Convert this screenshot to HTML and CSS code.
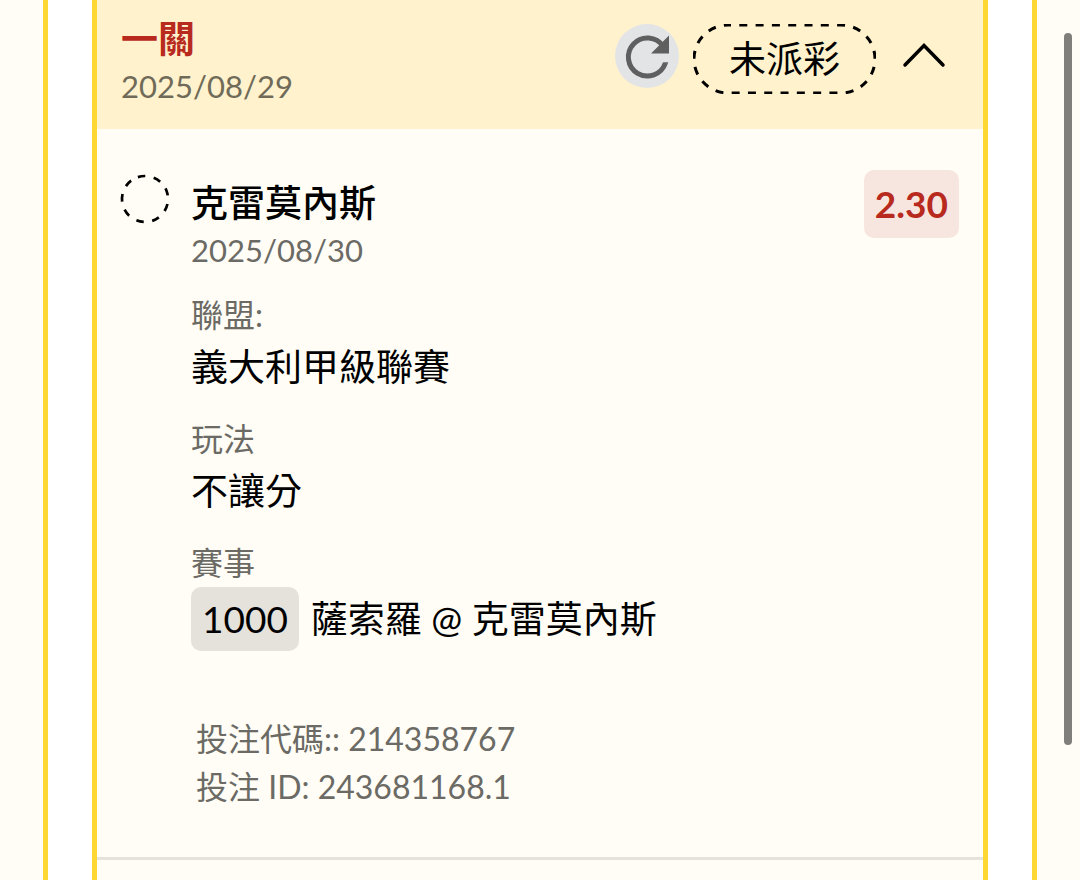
FILE: index.html
```html
<!DOCTYPE html>
<html lang="zh-Hant">
<head>
<meta charset="utf-8">
<meta name="viewport" content="width=device-width, initial-scale=1">
<title>投注</title>
<link rel="stylesheet" href="styles.css">
</head>
<body>
<main class="panel">
  <article class="slip">
    <header class="slip-header">
      <div class="slip-heading">
        <h1 class="slip-title">一關</h1>
        <time class="date" datetime="2025-08-29">2025/08/29</time>
      </div>
      <div class="slip-actions">
        <button class="refresh" type="button" aria-label="重新整理">
          <svg class="refresh-icon" viewBox="0 0 64 64" aria-hidden="true">
            <path d="M48.1 22.300A19 19 0 1 0 50.4 39" fill="none" stroke="#5f5f5f" stroke-width="5"/>
            <path d="M48 38.200H53.200L52.700 40Z" fill="#5f5f5f"/>
            <path d="M54 11.500V29.500H36Z" fill="#5f5f5f"/>
          </svg>
        </button>
        <div class="status">
          <svg class="status-outline" aria-hidden="true">
            <rect class="status-stroke" x="1" y="1" rx="34" ry="34"/>
          </svg>
          <span>未派彩</span>
        </div>
        <button class="toggle" type="button" aria-label="收合">
          <svg class="toggle-icon" viewBox="0 0 48 32" aria-hidden="true">
            <path d="M5 26 24 6.500 43 26" fill="none" stroke="#000" stroke-width="3.500" stroke-linecap="round"/>
          </svg>
        </button>
      </div>
    </header>
    <section class="leg">
      <svg class="leg-marker" viewBox="0 0 50 50" aria-hidden="true">
        <circle cx="25" cy="25" r="23" fill="none" stroke="#000" stroke-width="2.700" stroke-dasharray="7.500 8.550" transform="rotate(-108 25 25)"/>
      </svg>
      <div class="leg-body">
        <div class="leg-heading">
          <h2 class="leg-title">克雷莫內斯</h2>
          <time class="date" datetime="2025-08-30">2025/08/30</time>
        </div>
        <dl class="details">
          <div>
            <dt class="label">聯盟:</dt>
            <dd class="value">義大利甲級聯賽</dd>
          </div>
          <div>
            <dt class="label">玩法</dt>
            <dd class="value">不讓分</dd>
          </div>
          <div>
            <dt class="label">賽事</dt>
            <dd class="value match"><span class="match-code">1000</span><span>薩索羅 @ 克雷莫內斯</span></dd>
          </div>
        </dl>
        <div class="codes">
          <p class="code">投注代碼:: 214358767</p>
          <p class="code">投注 ID: 243681168.1</p>
        </div>
      </div>
      <strong class="odds">2.30</strong>
    </section>
  </article>
</main>
<div class="scroll-thumb"></div>
</body>
</html>
```
FILE: styles.css
```css
* {
  box-sizing: border-box;
}

body {
  margin: 0;
  background: #fffdf5;
  color: #000;
  font-family: Lato, "Noto Sans CJK TC", sans-serif;
  font-size: 37px;
  line-height: 48px;
}

h1, h2, p, dl, dd {
  margin: 0;
}

button {
  border: 0;
  padding: 0;
  background: none;
  cursor: pointer;
}

svg {
  display: block;
}

.panel {
  display: flex;
  min-height: 100vh;
  margin: 0 43px;
  padding: 0 44px;
  background: #fff;
  border: solid #fdd835;
  border-width: 0 5px;
}

.slip {
  flex: 1;
  background: #fffdf5;
  border: solid #fdd835;
  border-width: 0 5px;
}

.slip-header {
  display: flex;
  justify-content: space-between;
  padding: 15px 35px 20px 24px;
  background: #fff2cc;
}

.slip-title {
  color: #b82a1e;
  font-size: 37px;
  font-weight: 700;
}

.date {
  display: block;
  color: #6b6a65;
  font-size: 31px;
  line-height: 46px;
}

.slip-header .date {
  color: #706a59;
}

.slip-actions {
  display: flex;
  align-items: flex-start;
  padding-top: 9px;
}

.refresh {
  width: 64px;
  height: 64px;
  margin-right: 14px;
  border-radius: 50%;
  background: #e3e4e6;
}

.refresh-icon {
  width: 64px;
  height: 64px;
}

.status {
  position: relative;
  padding: 11px 36px;
  margin-right: 24px;
}

.status-outline {
  position: absolute;
  inset: 0;
  width: 100%;
  height: 100%;
}

.status-stroke {
  width: calc(100% - 2px);
  height: calc(100% - 2px);
  fill: none;
  stroke: #000;
  stroke-width: 3px;
  stroke-dasharray: 8 8.3;
  stroke-dashoffset: 5px;
}

.toggle {
  padding-top: 15px;
}

.toggle-icon {
  width: 48px;
  height: 32px;
}

.leg {
  display: flex;
  align-items: flex-start;
  padding: 41px 24px 46px 23px;
  border-bottom: 3px solid #e6e3dc;
}

.leg-marker {
  width: 50px;
  height: 50px;
  margin: 4px 21px 0 0;
}

.leg-body {
  flex: 1;
  padding-top: 9px;
}

.leg-title {
  font-size: 37px;
  font-weight: 500;
}

.details {
  display: flex;
  flex-direction: column;
  gap: 20px;
  margin-top: 18px;
}

.label {
  color: #6b6a65;
  font-size: 32px;
}

.value {
  line-height: 56px;
}

.match {
  display: flex;
  align-items: center;
  gap: 12px;
}

.match-code {
  padding: 4px 11px;
  border-radius: 10px;
  background: #e5e2dc;
}

.codes {
  padding: 64px 0 0 5px;
}

.code {
  color: #6b6a65;
  font-size: 32px;
}

.odds {
  padding: 10px 11px;
  border-radius: 10px;
  background: #f7e6df;
  color: #b82a1e;
  font-weight: 700;
}

.scroll-thumb {
  position: absolute;
  top: 33px;
  right: 8px;
  width: 8px;
  height: 712px;
  border-radius: 4px;
  background: #807f7b;
}
```
